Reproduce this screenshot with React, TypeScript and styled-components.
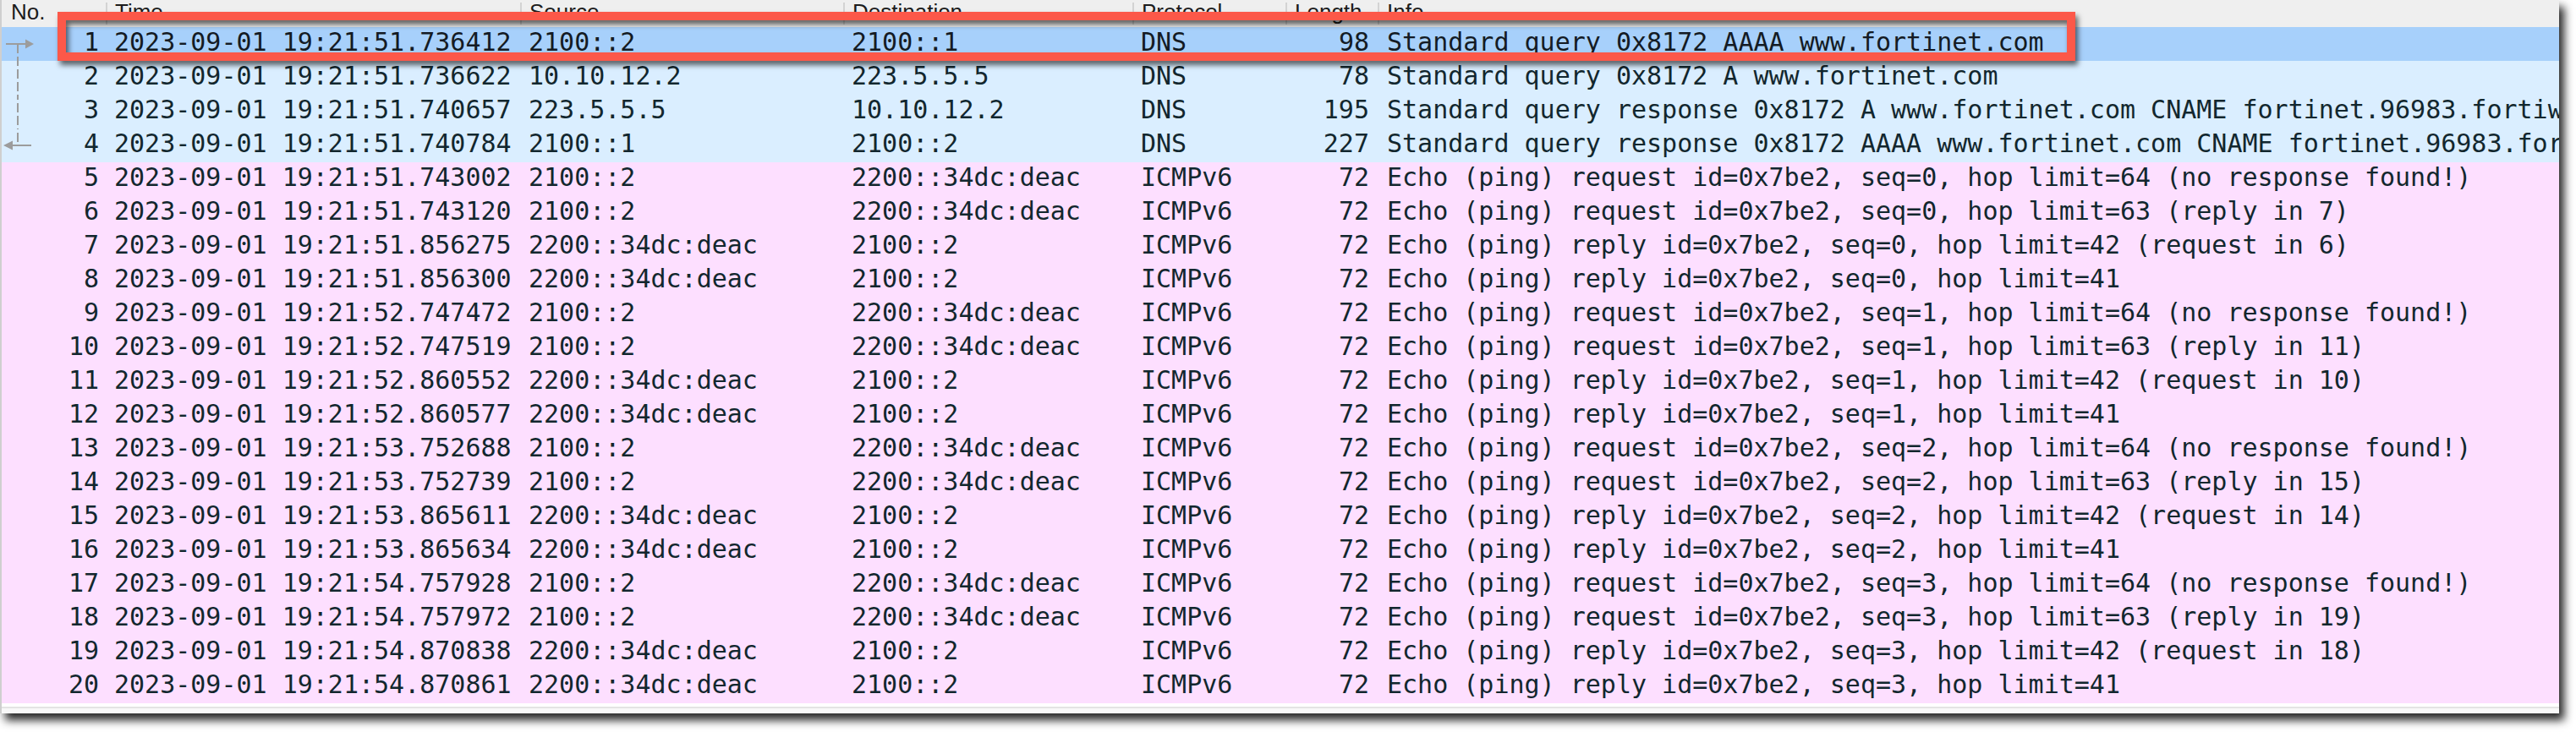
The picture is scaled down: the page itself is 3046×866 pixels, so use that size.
import React from "react";
import styled, { createGlobalStyle } from "styled-components";

const GlobalStyle = createGlobalStyle`
  html, body {
    margin: 0;
    padding: 0;
    background: #ffffff;
  }
`;

const COLUMNS = "123px 490px 382px 342px 181px 109px 1fr";

type Kind = "dns" | "icmp";
type Mark = "first" | "middle" | "last" | undefined;

interface Packet {
  no: number;
  time: string;
  src: string;
  dst: string;
  proto: string;
  len: number;
  info: string;
  kind: Kind;
  mark?: Mark;
}

const Page = styled.div`
  width: 3046px;
  height: 866px;
  overflow: hidden;
`;

const Window = styled.div`
  position: relative;
  width: 3024px;
  height: 844px;
  border-left: 2px solid #cfcfcf;
  background: #ffffff;
  box-shadow: 6px 8px 10px rgba(0, 0, 0, 0.85);
  display: flex;
  flex-direction: column;
`;

const Table = styled.div`
  flex: 1;
  display: flex;
  flex-direction: column;
  overflow: hidden;
`;

const HeaderRow = styled.div`
  display: grid;
  grid-template-columns: ${COLUMNS};
  align-items: start;
  height: 32px;
  background: #efefef;
  flex-shrink: 0;
`;

const HeaderCell = styled.div<{ $first?: boolean }>`
  font-family: "Liberation Sans", Arial, sans-serif;
  font-size: 26px;
  line-height: 22px;
  height: 26px;
  margin-top: 3px;
  color: #1c1c1c;
  padding: 0 10px 0 ${(p) => (p.$first ? "11px" : "9px")};
  border-left: ${(p) => (p.$first ? "none" : "2px solid #d3d3d3")};
  white-space: nowrap;
`;

const Row = styled.div<{ $kind: Kind; $selected?: boolean }>`
  display: grid;
  grid-template-columns: ${COLUMNS};
  height: 40px;
  flex-shrink: 0;
  background: ${(p) =>
    p.$selected ? "#a7d0fb" : p.$kind === "dns" ? "#daeeff" : "#fddfff"};
  color: ${(p) => (p.$selected ? "#141b24" : "#12272e")};
  font-family: "DejaVu Sans Mono", "Liberation Mono", monospace;
  font-size: 30px;
  line-height: 36px;
`;

const Cell = styled.div<{ $align?: "left" | "right" }>`
  padding: 0 10px;
  white-space: nowrap;
  overflow: hidden;
  text-align: ${(p) => p.$align ?? "left"};
`;

const InfoCell = styled.div`
  padding-left: 11px;
  white-space: nowrap;
  overflow: hidden;
`;

const NoCell = styled.div`
  display: flex;
  align-items: flex-start;
  padding-right: 8px;
`;

const MarkSlot = styled.svg`
  flex-shrink: 0;
  width: 44px;
  height: 40px;
  display: block;
`;

const Number = styled.span`
  flex: 1;
  text-align: right;
`;

const Footer = styled.div`
  flex-shrink: 0;
  height: 12px;
  display: flex;
  flex-direction: column;
`;

const FooterGap = styled.div`
  height: 4px;
  background: #ffffff;
`;

const FooterLine = styled.div`
  height: 2px;
  background: #e4e4e4;
`;

const FooterTrack = styled.div`
  flex: 1;
  background: #f8f8f8;
`;

const HighlightFrame = styled.div`
  position: absolute;
  left: 66px;
  top: 14px;
  width: 2386px;
  height: 58px;
  box-sizing: border-box;
  border: 10px solid #fc5849;
  filter: drop-shadow(3px 5px 3px rgba(0, 0, 0, 0.6));
  pointer-events: none;
`;

const MARK_COLOR = "#9c9c9c";

function RelationMark({ mark }: { mark: Mark }) {
  return (
    <MarkSlot viewBox="0 0 44 40">
      {mark === "first" && (
        <>
          <line x1="5" y1="20" x2="30" y2="20" stroke={MARK_COLOR} strokeWidth="2" />
          <polygon points="28,14.5 38,20 28,25.5" fill={MARK_COLOR} />
          <line
            x1="19"
            y1="20"
            x2="19"
            y2="40"
            stroke={MARK_COLOR}
            strokeWidth="2"
            strokeDasharray="11 4"
          />
        </>
      )}
      {mark === "middle" && (
        <line
          x1="19"
          y1="0"
          x2="19"
          y2="40"
          stroke={MARK_COLOR}
          strokeWidth="2"
          strokeDasharray="11 4"
          strokeDashoffset="5"
        />
      )}
      {mark === "last" && (
        <>
          <line
            x1="19"
            y1="0"
            x2="19"
            y2="20"
            stroke={MARK_COLOR}
            strokeWidth="2"
            strokeDasharray="11 4"
            strokeDashoffset="10"
          />
          <line x1="12" y1="20" x2="35" y2="20" stroke={MARK_COLOR} strokeWidth="2" />
          <polygon points="2,20 13,14.5 13,25.5" fill={MARK_COLOR} />
        </>
      )}
    </MarkSlot>
  );
}

const D = "2023-09-01 19:21:";
const A = "2100::2";
const B = "2200::34dc:deac";

const echo = (
  type: "request" | "reply",
  seq: number,
  hop: number,
  tail?: string
) =>
  `Echo (ping) ${type} id=0x7be2, seq=${seq}, hop limit=${hop}${tail ? ` ${tail}` : ""}`;

const packets: Packet[] = [
  { no: 1, time: D + "51.736412", src: "2100::2", dst: "2100::1", proto: "DNS", len: 98, info: "Standard query 0x8172 AAAA www.fortinet.com", kind: "dns", mark: "first" },
  { no: 2, time: D + "51.736622", src: "10.10.12.2", dst: "223.5.5.5", proto: "DNS", len: 78, info: "Standard query 0x8172 A www.fortinet.com", kind: "dns", mark: "middle" },
  { no: 3, time: D + "51.740657", src: "223.5.5.5", dst: "10.10.12.2", proto: "DNS", len: 195, info: "Standard query response 0x8172 A www.fortinet.com CNAME fortinet.96983.fortiweb-cloud.com A 23.57.82.84", kind: "dns", mark: "middle" },
  { no: 4, time: D + "51.740784", src: "2100::1", dst: "2100::2", proto: "DNS", len: 227, info: "Standard query response 0x8172 AAAA www.fortinet.com CNAME fortinet.96983.fortiweb-cloud.com AAAA 2200::34dc:deac", kind: "dns", mark: "last" },
  { no: 5, time: D + "51.743002", src: A, dst: B, proto: "ICMPv6", len: 72, info: echo("request", 0, 64, "(no response found!)"), kind: "icmp" },
  { no: 6, time: D + "51.743120", src: A, dst: B, proto: "ICMPv6", len: 72, info: echo("request", 0, 63, "(reply in 7)"), kind: "icmp" },
  { no: 7, time: D + "51.856275", src: B, dst: A, proto: "ICMPv6", len: 72, info: echo("reply", 0, 42, "(request in 6)"), kind: "icmp" },
  { no: 8, time: D + "51.856300", src: B, dst: A, proto: "ICMPv6", len: 72, info: echo("reply", 0, 41), kind: "icmp" },
  { no: 9, time: D + "52.747472", src: A, dst: B, proto: "ICMPv6", len: 72, info: echo("request", 1, 64, "(no response found!)"), kind: "icmp" },
  { no: 10, time: D + "52.747519", src: A, dst: B, proto: "ICMPv6", len: 72, info: echo("request", 1, 63, "(reply in 11)"), kind: "icmp" },
  { no: 11, time: D + "52.860552", src: B, dst: A, proto: "ICMPv6", len: 72, info: echo("reply", 1, 42, "(request in 10)"), kind: "icmp" },
  { no: 12, time: D + "52.860577", src: B, dst: A, proto: "ICMPv6", len: 72, info: echo("reply", 1, 41), kind: "icmp" },
  { no: 13, time: D + "53.752688", src: A, dst: B, proto: "ICMPv6", len: 72, info: echo("request", 2, 64, "(no response found!)"), kind: "icmp" },
  { no: 14, time: D + "53.752739", src: A, dst: B, proto: "ICMPv6", len: 72, info: echo("request", 2, 63, "(reply in 15)"), kind: "icmp" },
  { no: 15, time: D + "53.865611", src: B, dst: A, proto: "ICMPv6", len: 72, info: echo("reply", 2, 42, "(request in 14)"), kind: "icmp" },
  { no: 16, time: D + "53.865634", src: B, dst: A, proto: "ICMPv6", len: 72, info: echo("reply", 2, 41), kind: "icmp" },
  { no: 17, time: D + "54.757928", src: A, dst: B, proto: "ICMPv6", len: 72, info: echo("request", 3, 64, "(no response found!)"), kind: "icmp" },
  { no: 18, time: D + "54.757972", src: A, dst: B, proto: "ICMPv6", len: 72, info: echo("request", 3, 63, "(reply in 19)"), kind: "icmp" },
  { no: 19, time: D + "54.870838", src: B, dst: A, proto: "ICMPv6", len: 72, info: echo("reply", 3, 42, "(request in 18)"), kind: "icmp" },
  { no: 20, time: D + "54.870861", src: B, dst: A, proto: "ICMPv6", len: 72, info: echo("reply", 3, 41), kind: "icmp" },
];

const headers = ["No.", "Time", "Source", "Destination", "Protocol", "Length", "Info"];

export default function App() {
  return (
    <>
      <GlobalStyle />
      <Page>
        <Window>
          <Table>
            <HeaderRow>
              {headers.map((h, i) => (
                <HeaderCell key={h} $first={i === 0}>
                  {h}
                </HeaderCell>
              ))}
            </HeaderRow>
            {packets.map((p) => (
              <Row key={p.no} $kind={p.kind} $selected={p.no === 1}>
                <NoCell>
                  <RelationMark mark={p.mark} />
                  <Number>{p.no}</Number>
                </NoCell>
                <Cell>{p.time}</Cell>
                <Cell>{p.src}</Cell>
                <Cell>{p.dst}</Cell>
                <Cell>{p.proto}</Cell>
                <Cell $align="right">{p.len}</Cell>
                <InfoCell>{p.info}</InfoCell>
              </Row>
            ))}
          </Table>
          <Footer>
            <FooterGap />
            <FooterLine />
            <FooterTrack />
          </Footer>
          <HighlightFrame />
        </Window>
      </Page>
    </>
  );
}
